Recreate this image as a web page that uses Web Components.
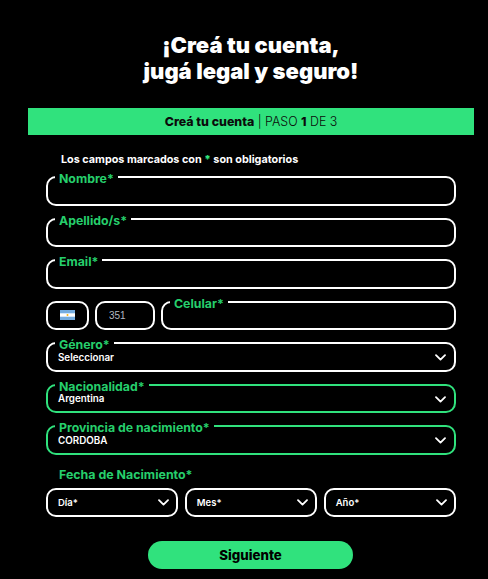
<!DOCTYPE html>
<html lang="es">
<head>
<meta charset="utf-8">
<title>Creá tu cuenta</title>
<style>
    html, body { margin: 0; background: #000; }
    body { font-family: Inter, "Liberation Sans", sans-serif; color: #fff; }
</style>
</head>
<body>
<signup-form>
    <step-banner></step-banner>
    <form-field label="Nombre*"></form-field>
    <form-field label="Apellido/s*"></form-field>
    <form-field label="Email*"></form-field>
    <phone-row></phone-row>
    <form-field label="Género*" value="Seleccionar" arrow></form-field>
    <form-field label="Nacionalidad*" value="Argentina" arrow active></form-field>
    <form-field label="Provincia de nacimiento*" value="CORDOBA" arrow active></form-field>
    <date-row></date-row>
</signup-form>
<script>
const CHEVRON = `<svg width="11" height="7" viewBox="0 0 11 7" fill="none" stroke="#fff" stroke-width="1.8" stroke-linecap="round" stroke-linejoin="round"><path d="M1 1.2 5.5 5.6 10 1.2"/></svg>`;

class SignupForm extends HTMLElement {
    constructor() {
        super();
        this.attachShadow({ mode: "open" });
    }

    connectedCallback() {
        this.shadowRoot.innerHTML = `
            <style>
                :host { display: block; width: 488px; height: 579px; box-sizing: border-box; padding-top: 32px; overflow: hidden; }
                h1 {
                    margin: 0 14px 24px 28px;
                    font-size: 22px;
                    line-height: 26px;
                    font-weight: 900;
                    text-align: center;
                }
                .note {
                    margin: 18px 0 10px 61px;
                    font-size: 10.8px;
                    line-height: 13px;
                    font-weight: 700;
                }
                .note b { color: #30e27d; }
                .fields { display: flex; flex-direction: column; gap: 12px; padding: 0 32px 0 46px; }
                .submit { display: flex; margin-top: 24px; padding-left: 148px; }
                button {
                    width: 205px;
                    height: 28px;
                    border: 0;
                    border-radius: 14px;
                    background: #30e27d;
                    color: #000;
                    font: 800 13.3px Inter, "Liberation Sans", sans-serif;
                }
            </style>
            <h1>¡Creá tu cuenta,<br>jugá legal y seguro!</h1>
            <slot name="banner"></slot>
            <p class="note">Los campos marcados con <b>*</b> son obligatorios</p>
            <div class="fields"><slot></slot></div>
            <div class="submit"><button type="button">Siguiente</button></div>
        `;
        this.querySelector("step-banner").slot = "banner";
    }
}

class StepBanner extends HTMLElement {
    constructor() {
        super();
        this.attachShadow({ mode: "open" });
    }

    connectedCallback() {
        this.shadowRoot.innerHTML = `
            <style>
                :host {
                    display: block;
                    margin: 0 14px 0 28px;
                    height: 27px;
                    background: #30e27d;
                    color: #0b0b0b;
                    font-size: 12.4px;
                    line-height: 27px;
                    text-align: center;
                    font-weight: 300;
                }
                b { font-weight: 800; }
            </style>
            <b>Creá tu cuenta</b> | PASO <b>1</b> DE 3
        `;
    }
}

class FormField extends HTMLElement {
    constructor() {
        super();
        this.attachShadow({ mode: "open" });
    }

    connectedCallback() {
        const label = this.getAttribute("label");
        const value = this.getAttribute("value");
        this.shadowRoot.innerHTML = `
            <style>
                :host { display: block; flex: 1; min-width: 0; position: relative; }
                .box {
                    box-sizing: border-box;
                    height: 29.5px;
                    border: 2px solid #fff;
                    border-radius: 10px;
                    display: flex;
                    align-items: center;
                    justify-content: space-between;
                    padding: 2px 8px 0 10px;
                    background: #000;
                }
                :host([active]) .box { border-color: #30e27d; }
                .label {
                    position: absolute;
                    left: 9px;
                    top: -4px;
                    padding: 0 4px;
                    background: #000;
                    color: #26cf6c;
                    font-size: 12.3px;
                    line-height: 14px;
                    font-weight: 700;
                    white-space: nowrap;
                }
                .value { font-size: 9.8px; line-height: 12px; font-weight: 600; color: #fff; }
            </style>
            <div class="box">
                <span class="value">${value || ""}</span>
                ${this.hasAttribute("arrow") ? CHEVRON : ""}
            </div>
            <span class="label">${label}</span>
        `;
    }
}

class PhoneRow extends HTMLElement {
    constructor() {
        super();
        this.attachShadow({ mode: "open" });
    }

    connectedCallback() {
        this.shadowRoot.innerHTML = `
            <style>
                :host { display: flex; gap: 6px; }
                .box {
                    box-sizing: border-box;
                    height: 29.5px;
                    border: 2px solid #fff;
                    border-radius: 10px;
                    display: flex;
                    align-items: center;
                }
                .flag { width: 43px; justify-content: center; }
                .code {
                    width: 60px;
                    padding-left: 12px;
                    color: #b4bac2;
                    font: 10px "Liberation Sans", sans-serif;
                }
                form-field { flex: 1; }
                svg { display: block; }
            </style>
            <div class="box flag">
                <svg width="15" height="10" viewBox="0 0 15 10">
                    <rect width="15" height="10" fill="#74acdf"/>
                    <rect y="3.3" width="15" height="3.4" fill="#fff"/>
                    <circle cx="7.5" cy="5" r="1" fill="#f6b40e"/>
                </svg>
            </div>
            <div class="box code">351</div>
            <form-field label="Celular*"></form-field>
        `;
    }
}

class DateRow extends HTMLElement {
    constructor() {
        super();
        this.attachShadow({ mode: "open" });
    }

    connectedCallback() {
        const box = (text) => `<div class="box"><span>${text}</span>${CHEVRON}</div>`;
        this.shadowRoot.innerHTML = `
            <style>
                :host { display: block; }
                .title {
                    margin: 0 0 5px 13px;
                    color: #26cf6c;
                    font-size: 12.4px;
                    line-height: 16px;
                    font-weight: 700;
                }
                .row { display: flex; gap: 6.5px; }
                .box {
                    box-sizing: border-box;
                    flex: 1;
                    height: 29.5px;
                    border: 2px solid #fff;
                    border-radius: 10px;
                    display: flex;
                    align-items: center;
                    justify-content: space-between;
                    padding: 0 7px 0 10px;
                    font-size: 9.5px;
                    font-weight: 600;
                }
            </style>
            <div class="title">Fecha de Nacimiento*</div>
            <div class="row">${box("Día*")}${box("Mes*")}${box("Año*")}</div>
        `;
    }
}

customElements.define("signup-form", SignupForm);
customElements.define("step-banner", StepBanner);
customElements.define("form-field", FormField);
customElements.define("phone-row", PhoneRow);
customElements.define("date-row", DateRow);
</script>
</body>
</html>
